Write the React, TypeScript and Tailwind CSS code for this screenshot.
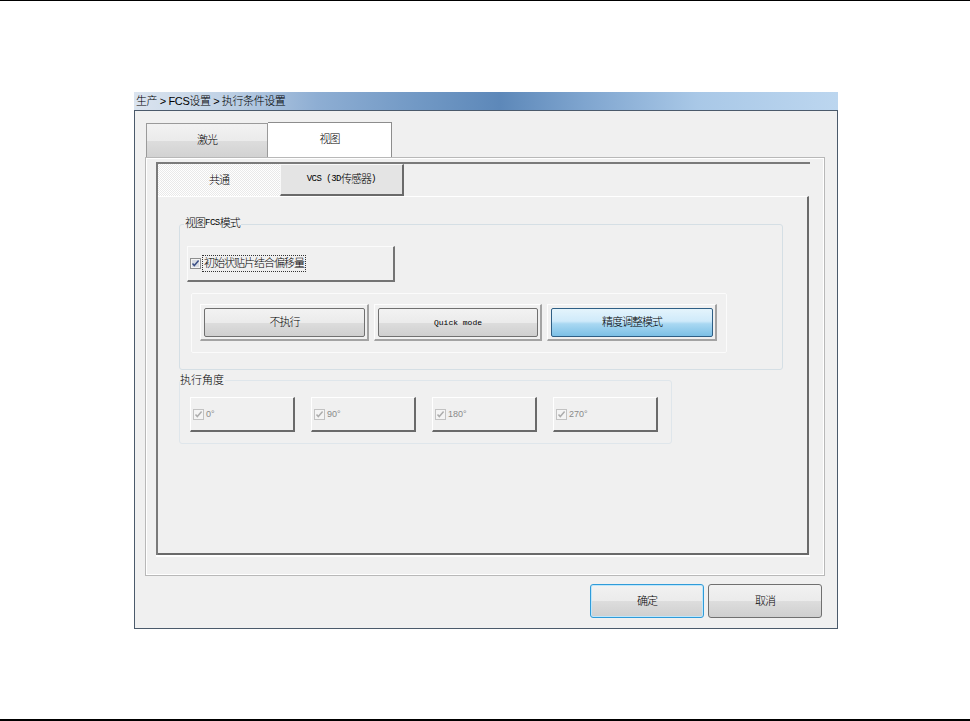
import React from "react";

function Check({ disabled }: { disabled?: boolean }) {
  return (
    <svg width="11" height="11" viewBox="0 0 11 11" className="shrink-0 block">
      <rect x="0.5" y="0.5" width="10" height="10" fill="#f4f4f4" stroke={disabled ? "#c2c2c2" : "#8e8f8f"} />
      {!disabled && <rect x="2" y="2" width="7" height="7" fill="#d9dde4" />}
      <path d="M2.5 5.5 L4.3 7.6 L8.6 2.6" fill="none" stroke={disabled ? "#adadad" : "#3b4f86"} strokeWidth="1.5" />
    </svg>
  );
}

function FrameButton({ className, blue, children }: { className: string; blue?: boolean; children: React.ReactNode }) {
  return (
    <div className={`h-[37px] shrink-0 border-t border-l border-r-2 border-b-2 border-t-[#fdfdfd] border-l-[#fdfdfd] border-r-[#a3a3a3] border-b-[#a3a3a3] pt-[3px] pl-[3px] pr-[2px] pb-[2px] ${className}`}>
      <div
        className={
          blue
            ? "w-full h-full rounded-[2px] border border-[#2f5f85] flex items-center justify-center bg-[linear-gradient(#e4f4fc_0%,#cfeafa_45%,#a9d8f2_55%,#7cc0e6_100%)]"
            : "w-full h-full rounded-[2px] border border-[#707070] flex items-center justify-center bg-[linear-gradient(#f2f2f2_0%,#ebebeb_50%,#dddddd_50%,#cfcfcf_100%)]"
        }
      >
        {children}
      </div>
    </div>
  );
}

function AngleButton({ label }: { label: string }) {
  return (
    <div className="w-[105px] h-[35px] shrink-0 border-t border-l border-r-2 border-b-2 border-t-white border-l-white border-r-[#6a6a6a] border-b-[#6a6a6a] flex items-center pl-[2px] gap-[2px]">
      <Check disabled />
      <span className="text-[9px] text-[#8a8a8a] font-['Liberation_Sans',sans-serif]">{label}</span>
    </div>
  );
}

export default function App() {
  return (
    <div className="w-[970px] h-[721px] bg-white flex flex-col text-black text-[11px] leading-none font-light font-['Liberation_Sans','Noto_Sans_CJK_SC',sans-serif]">
      <div className="h-[1px] w-full bg-black shrink-0" />
      <div className="ml-[134px] mt-[91px] w-[704px] h-[537px] flex flex-col shrink-0">
        {/* title bar */}
        <div className="h-[18px] shrink-0 flex items-center pl-[2px] bg-[linear-gradient(90deg,#dbe4ef_0%,#c2d3e6_12%,#8eaed3_26%,#7299c5_40%,#5d88b9_52%,#7fa5cf_64%,#a9c8e7_80%,#bcd6ef_100%)]">
          <span className="tracking-[-0.4px]">生产 &gt; FCS设置 &gt; 执行条件设置</span>
        </div>
        {/* body */}
        <div className="flex-1 border border-[#4b5a6b] bg-[#f0f0f0] flex flex-col">
          {/* outer tab control */}
          <div className="ml-[10px] mt-[11px] w-[680px] flex flex-col shrink-0">
            <div className="h-[35px] flex items-end">
              <div className="ml-[1px] w-[122px] h-[34px] border border-b-0 border-[#9a9a9a] bg-[linear-gradient(#f2f2f2_0%,#ebebeb_50%,#dddddd_50%,#d2d2d2_100%)] flex items-center justify-center tracking-[-1px]">
                激光
              </div>
              <div className="w-[124px] h-[35px] border border-b-0 border-l-0 border-[#8d8d8d] bg-white flex items-center justify-center tracking-[-1px] pb-[2px]">
                视图
              </div>
            </div>
            <div className="h-[419px] border border-[#b8b8b8] shadow-[inset_1px_1px_0_#ffffff,inset_-1px_-1px_0_#ffffff] flex flex-col">
              {/* inner tab control */}
              <div className="ml-[10px] mt-[4px] w-[654px] h-[393px] border-t-2 border-l-2 border-[#7a7a7a] flex flex-col shadow-[0_2px_0_#ffffff]">
                <div className="h-[32px] flex shrink-0">
                  <div className="w-[122px] h-full bg-[repeating-conic-gradient(#ffffff_0%_25%,#e9e9e9_0%_50%)] bg-[length:2px_2px] flex items-center justify-center tracking-[-1px]">
                    共通
                  </div>
                  <div className="w-[124px] h-full bg-[#e4e4e4] border-t border-l border-t-[#f8f8f8] border-l-[#f8f8f8] border-r-2 border-b-2 border-r-[#6a6a6a] border-b-[#6a6a6a] flex items-center justify-center">
                    <span className="font-['Liberation_Mono',monospace] text-[9px] tracking-[-0.5px]">VCS (3D</span>
                    <span className="tracking-[-1px]">传感器</span>
                    <span className="font-['Liberation_Mono',monospace] text-[9px]">)</span>
                  </div>
                </div>
                <div className="flex-1 mr-[1px] border-t border-t-white border-r-2 border-b-2 border-r-[#6a6a6a] border-b-[#6a6a6a] flex flex-col">
                  {/* group 1 */}
                  <div className="relative ml-[21px] mt-[27px] w-[604px] h-[146px] border border-[#d5dfe5] rounded-[3px] flex flex-col shrink-0">
                    <div className="absolute left-[4px] -top-[7px] px-[1px] bg-[#f0f0f0] flex items-center tracking-[-1px]">
                      视图<span className="font-['Liberation_Mono',monospace] text-[9px] tracking-[-0.5px]">FCS</span>模式
                    </div>
                    <div className="ml-[7px] mt-[21px] w-[208px] h-[36px] shrink-0 border-t border-l border-r-2 border-b-2 border-t-[#fbfbfb] border-l-[#fbfbfb] border-r-[#747474] border-b-[#747474] flex items-center pl-[2px] gap-[1px]">
                      <Check />
                      <span className="border border-dotted border-[#333] px-[1px] py-[2px] tracking-[-1px]">初始状贴片结合偏移量</span>
                    </div>
                    <div className="ml-[11px] mt-[11px] w-[536px] h-[60px] shrink-0 border border-[#fbfbfb] rounded-[2px] flex items-start pl-[8px] pt-[10px] gap-[5px]">
                      <FrameButton className="w-[169px]">
                        <span className="tracking-[-1px]">不执行</span>
                      </FrameButton>
                      <FrameButton className="w-[168px]">
                        <span className="font-['Liberation_Mono',monospace] text-[8px]">Quick mode</span>
                      </FrameButton>
                      <FrameButton className="w-[170px]" blue>
                        <span className="tracking-[-1px]">精度调整模式</span>
                      </FrameButton>
                    </div>
                  </div>
                  {/* group 2 */}
                  <div className="relative ml-[21px] mt-[10px] w-[493px] h-[64px] border border-[#dfe6eb] rounded-[3px] flex items-start pl-[10px] pt-[16px] gap-[16px] shrink-0">
                    <div className="absolute left-[0px] -top-[6px] pr-[1px] bg-[#f0f0f0] text-[11px]">执行角度</div>
                    <AngleButton label="0°" />
                    <AngleButton label="90°" />
                    <AngleButton label="180°" />
                    <AngleButton label="270°" />
                  </div>
                </div>
              </div>
            </div>
          </div>
          {/* bottom buttons */}
          <div className="mt-[8px] flex justify-end pr-[15px] gap-[4px]">
            <div className="w-[114px] h-[34px] rounded-[3px] border border-[#2f9bd9] shadow-[inset_0_0_0_1px_#bfe6fa] flex items-center justify-center bg-[linear-gradient(#f2f2f2_0%,#ebebeb_50%,#dddddd_50%,#cfcfcf_100%)] tracking-[-1px]">
              确定
            </div>
            <div className="w-[114px] h-[34px] rounded-[3px] border border-[#707070] flex items-center justify-center bg-[linear-gradient(#f2f2f2_0%,#ebebeb_50%,#dddddd_50%,#cfcfcf_100%)] tracking-[-1px]">
              取消
            </div>
          </div>
        </div>
      </div>
      <div className="mt-auto h-[2px] w-full bg-black shrink-0" />
    </div>
  );
}
